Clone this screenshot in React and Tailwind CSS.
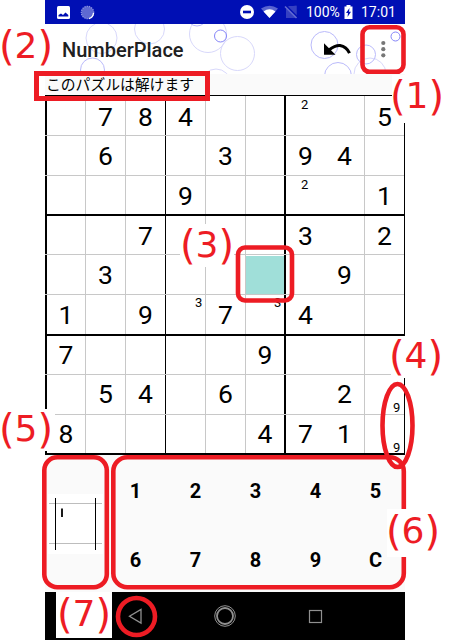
import React from "react";

const colStyle = { gridTemplateColumns: "40px 40px 40px 40px 40px 39px 41px 39px 40px" };
const rowStarts = [95, 135, 175, 214, 254, 294, 334, 374, 414, 453];
const rows = [
  " 784    5",
  " 6  3 94 ",
  "   9    1",
  "  7   3 2",
  " 3     9 ",
  "1 9 7 4  ",
  "7    9   ",
  " 54 6  2 ",
  "8    471 ",
];
const notes = {
  "0-6": ["2", "left-[15px] top-[1px]"],
  "2-6": ["2", "left-[15px] top-[1px]"],
  "5-3": ["3", "left-[29px] top-0"],
  "5-5": ["3", "left-[28px] top-0"],
  "7-8": ["9", "left-[28px] top-[25px]"],
  "8-8": ["9", "left-[28px] top-[25px]"],
};
const leftBorders = [
  "border-l-2 border-black",
  "border-l border-[#c8c8c8]",
  "border-l border-[#c8c8c8]",
  "border-l border-black",
  "border-l border-[#c8c8c8]",
  "border-l border-[#c8c8c8]",
  "border-l-2 border-black",
  "",
  "border-l border-[#c8c8c8]",
];
const topBorders = [
  "border-t border-black",
  "border-t border-[#c8c8c8]",
  "border-t border-[#c8c8c8]",
  "border-t-2 border-black",
  "border-t border-[#c8c8c8]",
  "border-t border-[#c8c8c8]",
  "border-t-2 border-black",
  "border-t border-[#c8c8c8]",
  "border-t border-[#c8c8c8]",
];

function Row({ r }) {
  const h = rowStarts[r + 1] - rowStarts[r];
  const shift = 95 + 21.6 + 39.62 * r - rowStarts[r] - 20;
  return (
    <div className={`relative grid ${topBorders[r]}`} style={{ ...colStyle, height: h }}>
      {rows[r].split("").map((d, c) => {
        const note = notes[`${r}-${c}`];
        return (
          <div key={c} className={`relative flex justify-center ${leftBorders[c]}`}>
            {r === 4 && c === 5 && <div className="mt-px h-[38px] w-full bg-[#a0dfd9]" />}
            {d !== " " && (
              <span className="text-[26.5px] leading-[38px]" style={{ marginTop: Math.round(shift) }}>
                {d}
              </span>
            )}
            {note && <span className={`absolute text-[13px] leading-4 ${note[1]}`}>{note[0]}</span>}
          </div>
        );
      })}
    </div>
  );
}

function StatusBar() {
  return (
    <div className="flex h-6 items-center bg-[#000fb4] pl-3 pr-[9px] text-white">
      <svg width="13" height="13" viewBox="0 0 13 13">
        <rect width="13" height="13" rx="1.5" fill="#fff" />
        <path d="M1.500 10.500V9L4 7.500 6 9 8.500 6.500 11.300 9V10.500z" fill="#000fb4" />
      </svg>
      <svg className="ml-[10px]" width="15" height="15" viewBox="0 0 15 15">
        <circle cx="7.5" cy="7.5" r="6.2" fill="#5f69d2" stroke="#8f96e2" strokeWidth="1.2" strokeDasharray="1.3 1" />
        <path d="M13.500 8A6.300 6.300 0 0 1 9 13.600" fill="none" stroke="#fff" strokeWidth="1.300" />
      </svg>
      <svg className="ml-auto" width="62" height="16" viewBox="0 0 62 16">
        <circle cx="7" cy="8" r="7" fill="#fff" />
        <rect x="3" y="6.700" width="8" height="2.600" fill="#000fb4" />
        <path d="M21 4.500Q29.500-1 38 4.500L29.500 14z" fill="#5963d0" />
        <path d="M23.500 7.500Q29.500 3 35.500 7.500L29.500 14z" fill="#fff" />
        <path d="M56.500 1.500V14H46V3z" fill="#3540c2" />
        <path d="M48 2H56.500V11z" fill="#3540c2" />
        <path d="M46 1.500 57.500 13" stroke="#000fb4" strokeWidth="1.500" />
        <path d="M45 2.500 56.500 14" stroke="#6069d1" strokeWidth="1.600" />
      </svg>
      <span className="ml-1 w-[35px] whitespace-nowrap text-[14px] leading-6">100%</span>
      <svg className="ml-[3px]" width="9" height="14" viewBox="0 0 9 14">
        <path d="M2.500 1.500V0h4v1.500H8.500V14H.5V1.500z" fill="#fff" />
        <path d="M5.500 3 2 8h2L3.500 12 7 6.800H5z" fill="#000fb4" />
      </svg>
      <span className="ml-2 w-[35px] whitespace-nowrap text-[14px] leading-6">17:01</span>
    </div>
  );
}

function AppBar() {
  return (
    <div className="relative flex h-[50px] items-center overflow-hidden bg-white pl-4">
      <svg className="absolute left-0 top-0" width="360" height="50" viewBox="45 24 360 50" fill="none" strokeWidth="1">
        <g stroke="#d8d8fb">
          <circle cx="101.500" cy="38" r="15.500" />
          <circle cx="149.500" cy="29" r="15" />
          <circle cx="208" cy="34" r="18.500" />
          <circle cx="237.500" cy="53.500" r="17" />
          <circle cx="216" cy="84" r="15" />
          <circle cx="370" cy="74" r="16" />
          <circle cx="197" cy="16" r="10" stroke="#b9b9fa" />
        </g>
        <g stroke="#babafb">
          <circle cx="92.500" cy="70" r="12" />
          <circle cx="324.500" cy="45" r="13.500" />
          <circle cx="338" cy="76" r="13.500" />
          <circle cx="366" cy="54.500" r="9.500" />
          <circle cx="220.500" cy="36" r="6" stroke="#8585f8" />
          <circle cx="395.500" cy="36.500" r="4.500" stroke="#8585f8" />
        </g>
        <path d="M324 43.300V54.700H335.500z" fill="#000" />
        <path d="M329 50Q335 45.200 340 45.500Q346.500 46.500 349.500 53.200" stroke="#000" strokeWidth="3" />
        <g fill="#777">
          <circle cx="383.300" cy="43" r="2.100" />
          <circle cx="383.300" cy="49.200" r="2.100" />
          <circle cx="383.300" cy="55.300" r="2.100" />
        </g>
      </svg>
      <h1 className="relative pl-px pt-0.5 text-[20px] font-medium text-[#202020]">NumberPlace</h1>
    </div>
  );
}

function Preview() {
  return (
    <svg width="55" height="60" viewBox="0 0 55 60">
      <rect width="55" height="60" fill="#fff" />
      <path d="M1 9.500H54M1 49.500H54" stroke="#bdbdbd" />
      <path d="M7.500 4V56M47.500 4V56" stroke="#000" />
      <path d="M14 14.500V23" stroke="#000" strokeWidth="1.800" />
    </svg>
  );
}

function Label({ n, patch, place }) {
  return (
    <>
      <span className={`absolute bg-white ${patch}`} />
      <span className={`absolute flex h-10 w-[54px] items-center justify-center whitespace-nowrap font-['DejaVu_Sans'] text-[40px] leading-10 text-[#ed1c24] ${place}`}>
        <span>(</span>
        <span className="text-[36px]">{n}</span>
        <span>)</span>
      </span>
    </>
  );
}

export default function App() {
  return (
    <div className="relative h-[640px] w-[450px] overflow-hidden bg-white pl-[45px] font-[Roboto,sans-serif] text-black">
      <div className="flex h-[640px] w-[360px] flex-col bg-[#fafafa]">
        <StatusBar />
        <AppBar />
        <div className="h-[21px] pl-px font-['Noto_Sans_CJK_JP',sans-serif] text-[14.8px] leading-[19px]">このパズルは解けます</div>
        <div className="h-[360px] w-[360px] border-b-2 border-r border-black bg-white">
          {rows.map((_, r) => <Row key={r} r={r} />)}
        </div>
        <div className="flex h-[137px]">
          <div className="w-[60px] pl-[3px] pt-[39px]"><Preview /></div>
          <div className="grid flex-1 grid-cols-5 grid-rows-[69px_69px] items-center pt-px text-center text-[20px] font-bold">
            {["1", "2", "3", "4", "5", "6", "7", "8", "9", "C"].map((k) => <span key={k} className="pl-px">{k}</span>)}
          </div>
        </div>
        <div className="h-12 bg-black">
          <svg width="360" height="48" viewBox="45 592 360 48" fill="none" stroke="#909090">
            <path d="M141 609.500V623L129.500 616.200z" strokeWidth="1.300" />
            <circle cx="225" cy="616" r="10.300" strokeWidth="1" />
            <circle cx="225" cy="616" r="8" strokeWidth="1.800" />
            <rect x="309.500" y="610.500" width="12" height="12" strokeWidth="1.200" />
          </svg>
        </div>
      </div>

      <svg className="absolute left-0 top-0" width="450" height="640" viewBox="0 0 450 640" fill="none" stroke="#ed1c24" strokeWidth="4.600">
        <rect x="362.500" y="27.300" width="41" height="44.500" rx="7" />
        <rect x="36.500" y="73.500" width="171" height="25" strokeWidth="5" />
        <rect x="238" y="247.500" width="54" height="53" rx="7" />
        <ellipse cx="397.500" cy="425.500" rx="15" ry="41.500" />
        <rect x="44.300" y="457.300" width="62.500" height="130" rx="13" />
        <rect x="113.300" y="457.300" width="290.500" height="130" rx="14" />
        <circle cx="136.500" cy="616.500" r="18.500" />
      </svg>

      <Label n="1" patch="left-[392px] top-[75px] h-[48px] w-[52px]" place="left-[390px] top-[76px]" />
      <Label n="2" patch="left-0 top-[24px] h-[46px] w-[45px]" place="left-[-1px] top-[26px]" />
      <Label n="3" patch="left-[180px] top-[224px] h-[43px] w-[54px]" place="left-[180px] top-[225px]" />
      <Label n="4" patch="left-[391px] top-[336px] h-[42px] w-[52px]" place="left-[389px] top-[336px]" />
      <Label n="5" patch="left-0 top-[409px] h-[42px] w-[55px]" place="left-[-1px] top-[409px]" />
      <Label n="6" patch="left-[387px] top-[509px] h-[48px] w-[54px]" place="left-[386px] top-[511px]" />
      <Label n="7" patch="left-[56px] top-[592px] h-[46px] w-[56px]" place="left-[57px] top-[594px]" />
    </div>
  );
}
